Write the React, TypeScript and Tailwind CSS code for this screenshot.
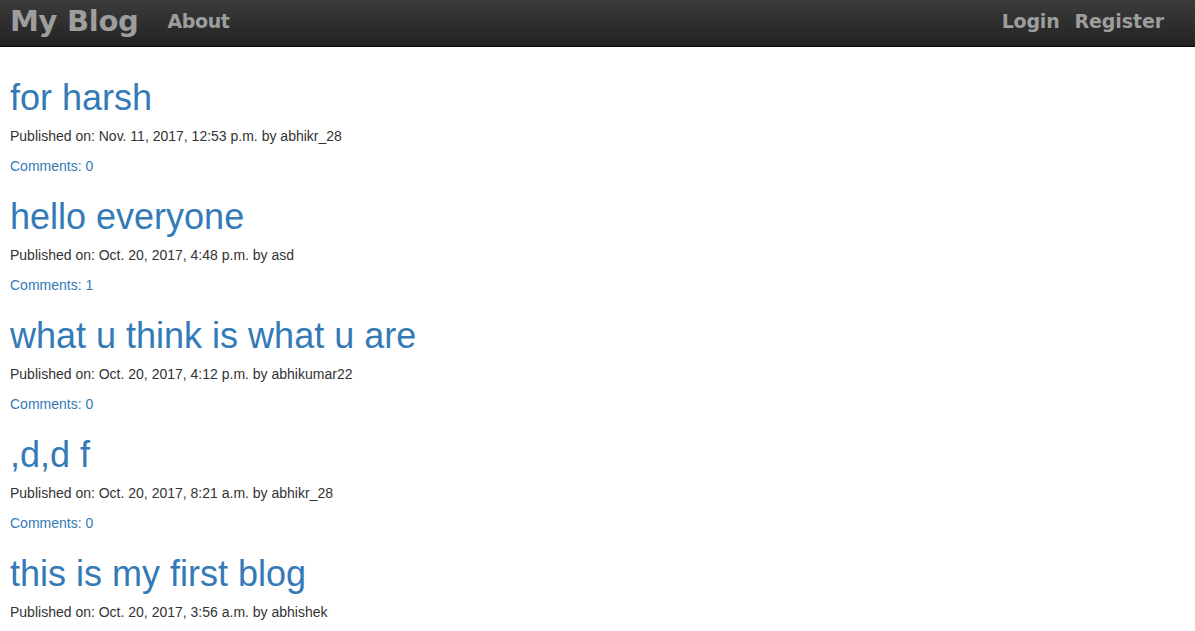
import React from 'react';

interface Post {
  title: string;
  published: string;
  author: string;
  comments?: number;
}

const posts: Post[] = [
  { title: 'for harsh', published: 'Nov. 11, 2017, 12:53 p.m.', author: 'abhikr_28', comments: 0 },
  { title: 'hello everyone', published: 'Oct. 20, 2017, 4:48 p.m.', author: 'asd', comments: 1 },
  { title: 'what u think is what u are', published: 'Oct. 20, 2017, 4:12 p.m.', author: 'abhikumar22', comments: 0 },
  { title: ',d,d f', published: 'Oct. 20, 2017, 8:21 a.m.', author: 'abhikr_28', comments: 0 },
  { title: 'this is my first blog', published: 'Oct. 20, 2017, 3:56 a.m.', author: 'abhishek', comments: 0 },
];

function Navbar() {
  return (
    <nav className="h-[47px] flex items-center justify-between pl-[10px] pr-[31px] pb-[4px] bg-gradient-to-b from-[#3c3c3c] to-[#222222] border-b border-[#080808] font-['DejaVu_Sans',sans-serif] font-bold text-[#9d9d9d]">
      <div className="flex items-center gap-[29px]">
        <a href="#" className="text-[29px] leading-none tracking-[-0.3px]">My Blog</a>
        <a href="#" className="text-[19px] leading-none tracking-[-0.4px]">About</a>
      </div>
      <div className="flex items-center gap-[15px]">
        <a href="#" className="text-[19px] leading-none tracking-[-0.2px]">Login</a>
        <a href="#" className="text-[19px] leading-none tracking-[-0.1px]">Register</a>
      </div>
    </nav>
  );
}

export default function App() {
  return (
    <div className="min-h-screen bg-white font-['Liberation_Sans',Arial,sans-serif] text-[#333] text-sm">
      <Navbar />
      <div className="px-[10px] pt-[10px]">
        {posts.map((post) => (
          <div key={post.title} className="pt-[21px]">
            <h1 className="text-[36px] leading-[40px] text-[#337ab7] mb-[8px]">
              <a href="#">{post.title}</a>
            </h1>
            <p className="leading-5 mb-[10px]">
              Published on: {post.published} by {post.author}
            </p>
            <p className="leading-5">
              <a href="#" className="text-[#337ab7]">Comments: {post.comments}</a>
            </p>
          </div>
        ))}
      </div>
    </div>
  );
}
